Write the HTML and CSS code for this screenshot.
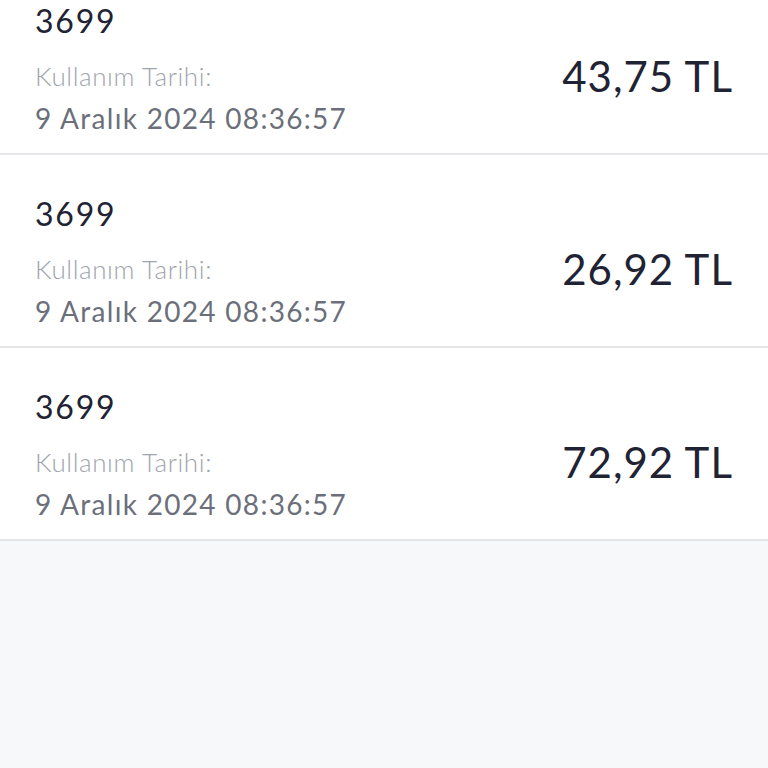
FILE: index.html
```html
<!DOCTYPE html>
<html lang="tr">
<head>
  <meta charset="UTF-8">
  <meta name="viewport" content="width=device-width, initial-scale=1.0">
  <title>Kullanımlar</title>
  <link rel="stylesheet" href="styles.css">
</head>
<body>
  <!-- Usage list (scrolled, first item partly hidden) -->
  <ul class="usage-list">
    <li class="usage-item">
      <div class="usage-info">
        <div class="usage-code">3699</div>
        <div class="usage-label">Kullanım Tarihi:</div>
        <div class="usage-date">9 Aralık 2024 08:36:57</div>
      </div>
      <div class="usage-amount">43,75 TL</div>
    </li>
    <li class="usage-item">
      <div class="usage-info">
        <div class="usage-code">3699</div>
        <div class="usage-label">Kullanım Tarihi:</div>
        <div class="usage-date">9 Aralık 2024 08:36:57</div>
      </div>
      <div class="usage-amount">26,92 TL</div>
    </li>
    <li class="usage-item">
      <div class="usage-info">
        <div class="usage-code">3699</div>
        <div class="usage-label">Kullanım Tarihi:</div>
        <div class="usage-date">9 Aralık 2024 08:36:57</div>
      </div>
      <div class="usage-amount">72,92 TL</div>
    </li>
  </ul>
</body>
</html>
```

FILE: styles.css
```css
body {
  font-family: Lato, "Noto Sans", sans-serif;
  background-color: #f7f8fa;
  margin: 0;
  padding: 0;
}

.usage-list {
  list-style: none;
  margin: -38px 0 0 0;
  padding: 0;
  background-color: #fff;
}

.usage-item {
  display: flex;
  justify-content: space-between;
  padding: 39px 35px 15px 35px;
  border-bottom: 2px solid #e5e6e9;
}

.usage-code {
  font-size: 32px;
  line-height: 40px;
  letter-spacing: 1.8px;
  color: #1f2333;
}

.usage-label {
  margin-top: 20px;
  font-size: 26px;
  font-weight: 300;
  line-height: 30px;
  letter-spacing: 0.6px;
  color: #a0a4ad;
}

.usage-date {
  margin-top: 7px;
  font-size: 28px;
  line-height: 40px;
  letter-spacing: 1.3px;
  color: #6b6f7a;
}

.usage-amount {
  margin-top: 50px;
  margin-bottom: auto;
  font-size: 42px;
  line-height: 50px;
  letter-spacing: 1px;
  color: #1f2333;
}
```
